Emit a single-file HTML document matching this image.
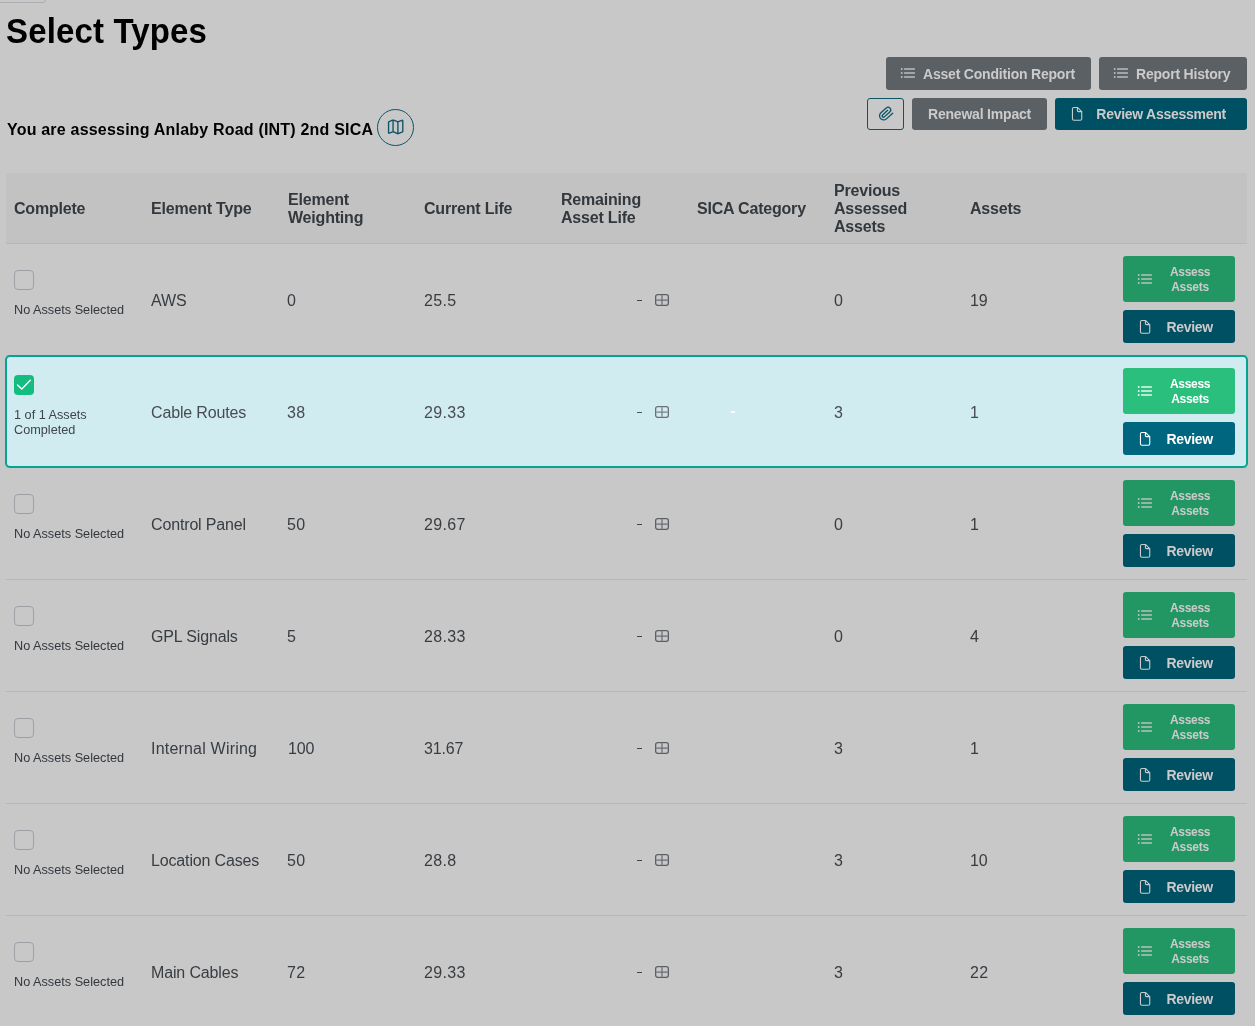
<!DOCTYPE html>
<html><head><meta charset="utf-8">
<style>
*{margin:0;padding:0;box-sizing:border-box}
html,body{width:1255px;height:1026px;overflow:hidden;background:#c8c8c8;font-family:"Liberation Sans",sans-serif;position:relative}
.a{position:absolute;white-space:nowrap}
.topbox{left:-2px;top:-10px;width:48px;height:13px;border:1px solid #abafb3;border-radius:3px}
h1{position:absolute;left:6px;top:12px;font-size:33px;font-weight:bold;color:#000;line-height:40px;letter-spacing:0.15px;transform-origin:0 31px;transform:scaleY(1.04)}
.assess{left:7px;top:120px;font-size:16px;font-weight:bold;color:#000;line-height:20px;letter-spacing:0.2px}
.mapc{left:377px;top:109px;width:37px;height:37px;border:1px solid #0b5566;border-radius:50%}
.btn{position:absolute;border-radius:3px;color:#cbcbcb;font-size:14px;font-weight:bold;letter-spacing:-0.2px;line-height:16px;white-space:nowrap}
.btn span{position:absolute}
.gray{background:#5b6064}
.teal{background:#005064}
.clip{left:867px;top:98px;width:37px;height:32px;border:1px solid #0b5566;border-radius:3px}
.thead{left:6px;top:173px;width:1241px;height:70px;background:#c2c2c2}
.th{position:absolute;font-size:16px;font-weight:bold;color:#33383d;line-height:18px;white-space:nowrap;letter-spacing:-0.2px}
.sep{position:absolute;left:6px;width:1241px;height:1px;background:#b5b8bb}
.td{position:absolute;font-size:16px;color:#383d42;line-height:18px;white-space:nowrap;letter-spacing:-0.15px}
.cb{position:absolute;left:14px;width:20px;height:20px;border:1.7px solid #9ca0a5;border-radius:4px}
.sm{position:absolute;left:14px;font-size:12.7px;color:#33383d;line-height:15px;white-space:nowrap}
</style></head><body><div id="w" style="position:absolute;left:0;top:0;width:1255px;height:1026px;will-change:transform">
<div class="a topbox"></div>
<h1>Select Types</h1>
<div class="btn gray" style="left:886px;top:57px;width:205px;height:33px"><svg style="position:absolute;left:14px;top:10px" width="16" height="12" viewBox="0 0 16 12"><g fill="#cbcbcb"><rect x="0.9" y="1.2" width="1.6" height="1.6"/><rect x="0.9" y="5.2" width="1.6" height="1.6"/><rect x="0.9" y="9.2" width="1.6" height="1.6"/><rect x="4.1" y="1.35" width="10.8" height="1.3"/><rect x="4.1" y="5.35" width="10.8" height="1.3"/><rect x="4.1" y="9.35" width="10.8" height="1.3"/></g></svg><span style="left:37px;top:9px">Asset Condition Report</span></div>
<div class="btn gray" style="left:1099px;top:57px;width:148px;height:33px"><svg style="position:absolute;left:14px;top:10px" width="16" height="12" viewBox="0 0 16 12"><g fill="#cbcbcb"><rect x="0.9" y="1.2" width="1.6" height="1.6"/><rect x="0.9" y="5.2" width="1.6" height="1.6"/><rect x="0.9" y="9.2" width="1.6" height="1.6"/><rect x="4.1" y="1.35" width="10.8" height="1.3"/><rect x="4.1" y="5.35" width="10.8" height="1.3"/><rect x="4.1" y="9.35" width="10.8" height="1.3"/></g></svg><span style="left:37px;top:9px">Report History</span></div>
<div class="a clip"><svg style="position:absolute;left:-1px;top:-1px" width="37" height="32" viewBox="0 0 37 32"><path transform="translate(18.95 15.77) rotate(48)" d="M4.1 -5.4 V3.1 A4.1 4.1 0 0 1 -4.1 3.1 V-4.1 A2.65 2.65 0 0 1 1.2 -4.1 V3.3 A1.3 1.3 0 0 1 -1.4 3.3 V-3.6" fill="none" stroke="#0b5566" stroke-width="1.3" stroke-linecap="round"/></svg></div>
<div class="btn gray" style="left:912px;top:98px;width:135px;height:32px"><span style="left:16px;top:8px">Renewal Impact</span></div>
<div class="btn teal" style="left:1055px;top:98px;width:192px;height:32px"><svg style="position:absolute;left:14.5px;top:8px" width="14" height="16" viewBox="0 0 14 16"><path d="M3.95 1.45 H7.4 L11.75 5.6 V12.75 A1.5 1.5 0 0 1 10.25 14.25 H3.95 A1.5 1.5 0 0 1 2.45 12.75 V2.95 A1.5 1.5 0 0 1 3.95 1.45 Z M7.4 1.45 V4.6 A1 1 0 0 0 8.4 5.6 H11.75" fill="none" stroke="#cbcbcb" stroke-width="1.1" stroke-linejoin="round"/></svg><span style="left:41.3px;top:8px;letter-spacing:-0.26px">Review Assessment</span></div>
<div class="a assess">You are assessing Anlaby Road (INT) 2nd SICA</div>
<div class="a mapc"><svg style="position:absolute;left:-1px;top:-1px" width="37" height="37" viewBox="0 0 37 37"><path d="M11.55 13.3 Q11.55 12.75 12.1 12.55 L15.6 11.2 Q16.07 11.04 16.55 11.2 L20.45 12.55 Q20.9 12.7 21.35 12.55 L25.1 11.3 Q25.8 11.1 25.8 11.9 V22.5 Q25.8 22.8 25.4 22.95 L21.35 24.7 Q20.9 24.87 20.45 24.7 L16.55 22.95 Q16.07 22.78 15.6 22.95 L12.3 24.1 Q11.55 24.35 11.55 23.6 Z M16.07 11.1 V22.8 M20.9 12.7 V24.8" fill="none" stroke="#0b5566" stroke-width="1.35" stroke-linejoin="round"/></svg></div>
<div class="a thead"></div>
<div class="th" style="left:14px;top:200px">Complete</div>
<div class="th" style="left:151px;top:200px">Element Type</div>
<div class="th" style="left:288px;top:191px">Element<br>Weighting</div>
<div class="th" style="left:424px;top:200px">Current Life</div>
<div class="th" style="left:561px;top:191px">Remaining<br>Asset Life</div>
<div class="th" style="left:697px;top:200px">SICA Category</div>
<div class="th" style="left:834px;top:182px">Previous<br>Assessed<br>Assets</div>
<div class="th" style="left:970px;top:200px">Assets</div>
<div class="sep" style="top:243px"></div>
<div class="sep" style="top:355px"></div>
<div class="sep" style="top:467px"></div>
<div class="sep" style="top:579px"></div>
<div class="sep" style="top:691px"></div>
<div class="sep" style="top:803px"></div>
<div class="sep" style="top:915px"></div>
<div class="cb" style="top:270px"></div>
<div class="sm" style="top:303px">No Assets Selected</div>
<div class="td" style="left:151px;top:291.5px;color:#383d42">AWS</div>
<div class="td" style="left:287px;top:291.5px;color:#383d42;letter-spacing:0.35px">0</div>
<div class="td" style="left:424px;top:291.5px;color:#383d42;letter-spacing:0.35px">25.5</div>
<div class="td" style="left:834px;top:291.5px;color:#383d42;letter-spacing:0.35px">0</div>
<div class="td" style="left:970px;top:291.5px;color:#383d42">19</div>
<div class="a" style="left:637px;top:300.2px;width:5.2px;height:1.3px;background:#40454a"></div>
<svg class="a" style="left:654px;top:293px" width="16" height="14" viewBox="0 0 16 14"><rect x="1.65" y="1.65" width="12.7" height="10.7" rx="2" fill="none" stroke="#5a5f64" stroke-width="1.3"/><path d="M8 2.3 V11.7 M2.3 7 H13.7" stroke="#5a5f64" stroke-width="1.25" stroke-opacity="0.85"/></svg>
<div class="btn" style="left:1123px;top:256px;width:112px;height:46px;background:#229663;color:#cbcbcb;font-size:12px;line-height:15px;letter-spacing:-0.3px"><svg style="position:absolute;left:14px;top:17px" width="16" height="12" viewBox="0 0 16 12"><g fill="#cbcbcb"><rect x="0.9" y="1.2" width="1.6" height="1.6"/><rect x="0.9" y="5.2" width="1.6" height="1.6"/><rect x="0.9" y="9.2" width="1.6" height="1.6"/><rect x="4.1" y="1.35" width="10.8" height="1.3"/><rect x="4.1" y="5.35" width="10.8" height="1.3"/><rect x="4.1" y="9.35" width="10.8" height="1.3"/></g></svg><span style="left:47px;top:9px;width:40px;text-align:center">Assess<br>Assets</span></div>
<div class="btn" style="left:1123px;top:310px;width:112px;height:33px;background:#005064;color:#cbcbcb;letter-spacing:-0.3px"><svg style="position:absolute;left:15px;top:9px" width="14" height="16" viewBox="0 0 14 16"><path d="M3.95 1.45 H7.4 L11.75 5.6 V12.75 A1.5 1.5 0 0 1 10.25 14.25 H3.95 A1.5 1.5 0 0 1 2.45 12.75 V2.95 A1.5 1.5 0 0 1 3.95 1.45 Z M7.4 1.45 V4.6 A1 1 0 0 0 8.4 5.6 H11.75" fill="none" stroke="#cbcbcb" stroke-width="1.1" stroke-linejoin="round"/></svg><span style="left:43.5px;top:9px">Review</span></div>
<div class="a" style="left:5px;top:355px;width:1243px;height:113px;background:#d1ecf1;border:2px solid #05a391;border-radius:5px"></div>
<div class="a" style="left:14px;top:375px;width:20px;height:20px;background:#14bc80;border-radius:4px"><svg style="position:absolute;left:0;top:0" width="20" height="20" viewBox="0 0 20 20"><path d="M3.5 10 L7.8 14 L16.3 5.3" fill="none" stroke="#fff" stroke-width="1.4" stroke-linecap="round" stroke-linejoin="round"/></svg></div>
<div class="sm" style="top:408px;color:#3f444a">1 of 1 Assets<br>Completed</div>
<div class="td" style="left:151px;top:403.5px;color:#474c52">Cable Routes</div>
<div class="td" style="left:287px;top:403.5px;color:#474c52;letter-spacing:0.35px">38</div>
<div class="td" style="left:424px;top:403.5px;color:#474c52;letter-spacing:0.35px">29.33</div>
<div class="td" style="left:834px;top:403.5px;color:#474c52;letter-spacing:0.35px">3</div>
<div class="td" style="left:970px;top:403.5px;color:#474c52">1</div>
<div class="a" style="left:637px;top:412.2px;width:5.2px;height:1.3px;background:#50555b"></div>
<svg class="a" style="left:654px;top:405px" width="16" height="14" viewBox="0 0 16 14"><rect x="1.65" y="1.65" width="12.7" height="10.7" rx="2" fill="none" stroke="#6a7075" stroke-width="1.3"/><path d="M8 2.3 V11.7 M2.3 7 H13.7" stroke="#6a7075" stroke-width="1.25" stroke-opacity="0.85"/></svg>
<div class="a" style="left:731px;top:411.3px;width:4px;height:1.8px;background:#fff"></div>
<div class="btn" style="left:1123px;top:368px;width:112px;height:46px;background:#2bbf7e;color:#ffffff;font-size:12px;line-height:15px;letter-spacing:-0.3px"><svg style="position:absolute;left:14px;top:17px" width="16" height="12" viewBox="0 0 16 12"><g fill="#ffffff"><rect x="0.9" y="1.2" width="1.6" height="1.6"/><rect x="0.9" y="5.2" width="1.6" height="1.6"/><rect x="0.9" y="9.2" width="1.6" height="1.6"/><rect x="4.1" y="1.35" width="10.8" height="1.3"/><rect x="4.1" y="5.35" width="10.8" height="1.3"/><rect x="4.1" y="9.35" width="10.8" height="1.3"/></g></svg><span style="left:47px;top:9px;width:40px;text-align:center">Assess<br>Assets</span></div>
<div class="btn" style="left:1123px;top:422px;width:112px;height:33px;background:#00657f;color:#ffffff;letter-spacing:-0.3px"><svg style="position:absolute;left:15px;top:9px" width="14" height="16" viewBox="0 0 14 16"><path d="M3.95 1.45 H7.4 L11.75 5.6 V12.75 A1.5 1.5 0 0 1 10.25 14.25 H3.95 A1.5 1.5 0 0 1 2.45 12.75 V2.95 A1.5 1.5 0 0 1 3.95 1.45 Z M7.4 1.45 V4.6 A1 1 0 0 0 8.4 5.6 H11.75" fill="none" stroke="#ffffff" stroke-width="1.1" stroke-linejoin="round"/></svg><span style="left:43.5px;top:9px">Review</span></div>
<div class="cb" style="top:494px"></div>
<div class="sm" style="top:527px">No Assets Selected</div>
<div class="td" style="left:151px;top:515.5px;color:#383d42">Control Panel</div>
<div class="td" style="left:287px;top:515.5px;color:#383d42;letter-spacing:0.35px">50</div>
<div class="td" style="left:424px;top:515.5px;color:#383d42;letter-spacing:0.35px">29.67</div>
<div class="td" style="left:834px;top:515.5px;color:#383d42;letter-spacing:0.35px">0</div>
<div class="td" style="left:970px;top:515.5px;color:#383d42">1</div>
<div class="a" style="left:637px;top:524.2px;width:5.2px;height:1.3px;background:#40454a"></div>
<svg class="a" style="left:654px;top:517px" width="16" height="14" viewBox="0 0 16 14"><rect x="1.65" y="1.65" width="12.7" height="10.7" rx="2" fill="none" stroke="#5a5f64" stroke-width="1.3"/><path d="M8 2.3 V11.7 M2.3 7 H13.7" stroke="#5a5f64" stroke-width="1.25" stroke-opacity="0.85"/></svg>
<div class="btn" style="left:1123px;top:480px;width:112px;height:46px;background:#229663;color:#cbcbcb;font-size:12px;line-height:15px;letter-spacing:-0.3px"><svg style="position:absolute;left:14px;top:17px" width="16" height="12" viewBox="0 0 16 12"><g fill="#cbcbcb"><rect x="0.9" y="1.2" width="1.6" height="1.6"/><rect x="0.9" y="5.2" width="1.6" height="1.6"/><rect x="0.9" y="9.2" width="1.6" height="1.6"/><rect x="4.1" y="1.35" width="10.8" height="1.3"/><rect x="4.1" y="5.35" width="10.8" height="1.3"/><rect x="4.1" y="9.35" width="10.8" height="1.3"/></g></svg><span style="left:47px;top:9px;width:40px;text-align:center">Assess<br>Assets</span></div>
<div class="btn" style="left:1123px;top:534px;width:112px;height:33px;background:#005064;color:#cbcbcb;letter-spacing:-0.3px"><svg style="position:absolute;left:15px;top:9px" width="14" height="16" viewBox="0 0 14 16"><path d="M3.95 1.45 H7.4 L11.75 5.6 V12.75 A1.5 1.5 0 0 1 10.25 14.25 H3.95 A1.5 1.5 0 0 1 2.45 12.75 V2.95 A1.5 1.5 0 0 1 3.95 1.45 Z M7.4 1.45 V4.6 A1 1 0 0 0 8.4 5.6 H11.75" fill="none" stroke="#cbcbcb" stroke-width="1.1" stroke-linejoin="round"/></svg><span style="left:43.5px;top:9px">Review</span></div>
<div class="cb" style="top:606px"></div>
<div class="sm" style="top:639px">No Assets Selected</div>
<div class="td" style="left:151px;top:627.5px;color:#383d42">GPL Signals</div>
<div class="td" style="left:287px;top:627.5px;color:#383d42;letter-spacing:0.35px">5</div>
<div class="td" style="left:424px;top:627.5px;color:#383d42;letter-spacing:0.35px">28.33</div>
<div class="td" style="left:834px;top:627.5px;color:#383d42;letter-spacing:0.35px">0</div>
<div class="td" style="left:970px;top:627.5px;color:#383d42;letter-spacing:0.35px">4</div>
<div class="a" style="left:637px;top:636.2px;width:5.2px;height:1.3px;background:#40454a"></div>
<svg class="a" style="left:654px;top:629px" width="16" height="14" viewBox="0 0 16 14"><rect x="1.65" y="1.65" width="12.7" height="10.7" rx="2" fill="none" stroke="#5a5f64" stroke-width="1.3"/><path d="M8 2.3 V11.7 M2.3 7 H13.7" stroke="#5a5f64" stroke-width="1.25" stroke-opacity="0.85"/></svg>
<div class="btn" style="left:1123px;top:592px;width:112px;height:46px;background:#229663;color:#cbcbcb;font-size:12px;line-height:15px;letter-spacing:-0.3px"><svg style="position:absolute;left:14px;top:17px" width="16" height="12" viewBox="0 0 16 12"><g fill="#cbcbcb"><rect x="0.9" y="1.2" width="1.6" height="1.6"/><rect x="0.9" y="5.2" width="1.6" height="1.6"/><rect x="0.9" y="9.2" width="1.6" height="1.6"/><rect x="4.1" y="1.35" width="10.8" height="1.3"/><rect x="4.1" y="5.35" width="10.8" height="1.3"/><rect x="4.1" y="9.35" width="10.8" height="1.3"/></g></svg><span style="left:47px;top:9px;width:40px;text-align:center">Assess<br>Assets</span></div>
<div class="btn" style="left:1123px;top:646px;width:112px;height:33px;background:#005064;color:#cbcbcb;letter-spacing:-0.3px"><svg style="position:absolute;left:15px;top:9px" width="14" height="16" viewBox="0 0 14 16"><path d="M3.95 1.45 H7.4 L11.75 5.6 V12.75 A1.5 1.5 0 0 1 10.25 14.25 H3.95 A1.5 1.5 0 0 1 2.45 12.75 V2.95 A1.5 1.5 0 0 1 3.95 1.45 Z M7.4 1.45 V4.6 A1 1 0 0 0 8.4 5.6 H11.75" fill="none" stroke="#cbcbcb" stroke-width="1.1" stroke-linejoin="round"/></svg><span style="left:43.5px;top:9px">Review</span></div>
<div class="cb" style="top:718px"></div>
<div class="sm" style="top:751px">No Assets Selected</div>
<div class="td" style="left:151px;top:739.5px;color:#383d42;letter-spacing:0.2px">Internal Wiring</div>
<div class="td" style="left:288px;top:739.5px;color:#383d42">100</div>
<div class="td" style="left:424px;top:739.5px;color:#383d42">31.67</div>
<div class="td" style="left:834px;top:739.5px;color:#383d42;letter-spacing:0.35px">3</div>
<div class="td" style="left:970px;top:739.5px;color:#383d42">1</div>
<div class="a" style="left:637px;top:748.2px;width:5.2px;height:1.3px;background:#40454a"></div>
<svg class="a" style="left:654px;top:741px" width="16" height="14" viewBox="0 0 16 14"><rect x="1.65" y="1.65" width="12.7" height="10.7" rx="2" fill="none" stroke="#5a5f64" stroke-width="1.3"/><path d="M8 2.3 V11.7 M2.3 7 H13.7" stroke="#5a5f64" stroke-width="1.25" stroke-opacity="0.85"/></svg>
<div class="btn" style="left:1123px;top:704px;width:112px;height:46px;background:#229663;color:#cbcbcb;font-size:12px;line-height:15px;letter-spacing:-0.3px"><svg style="position:absolute;left:14px;top:17px" width="16" height="12" viewBox="0 0 16 12"><g fill="#cbcbcb"><rect x="0.9" y="1.2" width="1.6" height="1.6"/><rect x="0.9" y="5.2" width="1.6" height="1.6"/><rect x="0.9" y="9.2" width="1.6" height="1.6"/><rect x="4.1" y="1.35" width="10.8" height="1.3"/><rect x="4.1" y="5.35" width="10.8" height="1.3"/><rect x="4.1" y="9.35" width="10.8" height="1.3"/></g></svg><span style="left:47px;top:9px;width:40px;text-align:center">Assess<br>Assets</span></div>
<div class="btn" style="left:1123px;top:758px;width:112px;height:33px;background:#005064;color:#cbcbcb;letter-spacing:-0.3px"><svg style="position:absolute;left:15px;top:9px" width="14" height="16" viewBox="0 0 14 16"><path d="M3.95 1.45 H7.4 L11.75 5.6 V12.75 A1.5 1.5 0 0 1 10.25 14.25 H3.95 A1.5 1.5 0 0 1 2.45 12.75 V2.95 A1.5 1.5 0 0 1 3.95 1.45 Z M7.4 1.45 V4.6 A1 1 0 0 0 8.4 5.6 H11.75" fill="none" stroke="#cbcbcb" stroke-width="1.1" stroke-linejoin="round"/></svg><span style="left:43.5px;top:9px">Review</span></div>
<div class="cb" style="top:830px"></div>
<div class="sm" style="top:863px">No Assets Selected</div>
<div class="td" style="left:151px;top:851.5px;color:#383d42">Location Cases</div>
<div class="td" style="left:287px;top:851.5px;color:#383d42;letter-spacing:0.35px">50</div>
<div class="td" style="left:424px;top:851.5px;color:#383d42;letter-spacing:0.35px">28.8</div>
<div class="td" style="left:834px;top:851.5px;color:#383d42;letter-spacing:0.35px">3</div>
<div class="td" style="left:970px;top:851.5px;color:#383d42">10</div>
<div class="a" style="left:637px;top:860.2px;width:5.2px;height:1.3px;background:#40454a"></div>
<svg class="a" style="left:654px;top:853px" width="16" height="14" viewBox="0 0 16 14"><rect x="1.65" y="1.65" width="12.7" height="10.7" rx="2" fill="none" stroke="#5a5f64" stroke-width="1.3"/><path d="M8 2.3 V11.7 M2.3 7 H13.7" stroke="#5a5f64" stroke-width="1.25" stroke-opacity="0.85"/></svg>
<div class="btn" style="left:1123px;top:816px;width:112px;height:46px;background:#229663;color:#cbcbcb;font-size:12px;line-height:15px;letter-spacing:-0.3px"><svg style="position:absolute;left:14px;top:17px" width="16" height="12" viewBox="0 0 16 12"><g fill="#cbcbcb"><rect x="0.9" y="1.2" width="1.6" height="1.6"/><rect x="0.9" y="5.2" width="1.6" height="1.6"/><rect x="0.9" y="9.2" width="1.6" height="1.6"/><rect x="4.1" y="1.35" width="10.8" height="1.3"/><rect x="4.1" y="5.35" width="10.8" height="1.3"/><rect x="4.1" y="9.35" width="10.8" height="1.3"/></g></svg><span style="left:47px;top:9px;width:40px;text-align:center">Assess<br>Assets</span></div>
<div class="btn" style="left:1123px;top:870px;width:112px;height:33px;background:#005064;color:#cbcbcb;letter-spacing:-0.3px"><svg style="position:absolute;left:15px;top:9px" width="14" height="16" viewBox="0 0 14 16"><path d="M3.95 1.45 H7.4 L11.75 5.6 V12.75 A1.5 1.5 0 0 1 10.25 14.25 H3.95 A1.5 1.5 0 0 1 2.45 12.75 V2.95 A1.5 1.5 0 0 1 3.95 1.45 Z M7.4 1.45 V4.6 A1 1 0 0 0 8.4 5.6 H11.75" fill="none" stroke="#cbcbcb" stroke-width="1.1" stroke-linejoin="round"/></svg><span style="left:43.5px;top:9px">Review</span></div>
<div class="cb" style="top:942px"></div>
<div class="sm" style="top:975px">No Assets Selected</div>
<div class="td" style="left:151px;top:963.5px;color:#383d42">Main Cables</div>
<div class="td" style="left:287px;top:963.5px;color:#383d42;letter-spacing:0.35px">72</div>
<div class="td" style="left:424px;top:963.5px;color:#383d42;letter-spacing:0.35px">29.33</div>
<div class="td" style="left:834px;top:963.5px;color:#383d42;letter-spacing:0.35px">3</div>
<div class="td" style="left:970px;top:963.5px;color:#383d42;letter-spacing:0.35px">22</div>
<div class="a" style="left:637px;top:972.2px;width:5.2px;height:1.3px;background:#40454a"></div>
<svg class="a" style="left:654px;top:965px" width="16" height="14" viewBox="0 0 16 14"><rect x="1.65" y="1.65" width="12.7" height="10.7" rx="2" fill="none" stroke="#5a5f64" stroke-width="1.3"/><path d="M8 2.3 V11.7 M2.3 7 H13.7" stroke="#5a5f64" stroke-width="1.25" stroke-opacity="0.85"/></svg>
<div class="btn" style="left:1123px;top:928px;width:112px;height:46px;background:#229663;color:#cbcbcb;font-size:12px;line-height:15px;letter-spacing:-0.3px"><svg style="position:absolute;left:14px;top:17px" width="16" height="12" viewBox="0 0 16 12"><g fill="#cbcbcb"><rect x="0.9" y="1.2" width="1.6" height="1.6"/><rect x="0.9" y="5.2" width="1.6" height="1.6"/><rect x="0.9" y="9.2" width="1.6" height="1.6"/><rect x="4.1" y="1.35" width="10.8" height="1.3"/><rect x="4.1" y="5.35" width="10.8" height="1.3"/><rect x="4.1" y="9.35" width="10.8" height="1.3"/></g></svg><span style="left:47px;top:9px;width:40px;text-align:center">Assess<br>Assets</span></div>
<div class="btn" style="left:1123px;top:982px;width:112px;height:33px;background:#005064;color:#cbcbcb;letter-spacing:-0.3px"><svg style="position:absolute;left:15px;top:9px" width="14" height="16" viewBox="0 0 14 16"><path d="M3.95 1.45 H7.4 L11.75 5.6 V12.75 A1.5 1.5 0 0 1 10.25 14.25 H3.95 A1.5 1.5 0 0 1 2.45 12.75 V2.95 A1.5 1.5 0 0 1 3.95 1.45 Z M7.4 1.45 V4.6 A1 1 0 0 0 8.4 5.6 H11.75" fill="none" stroke="#cbcbcb" stroke-width="1.1" stroke-linejoin="round"/></svg><span style="left:43.5px;top:9px">Review</span></div>
</div></body></html>
